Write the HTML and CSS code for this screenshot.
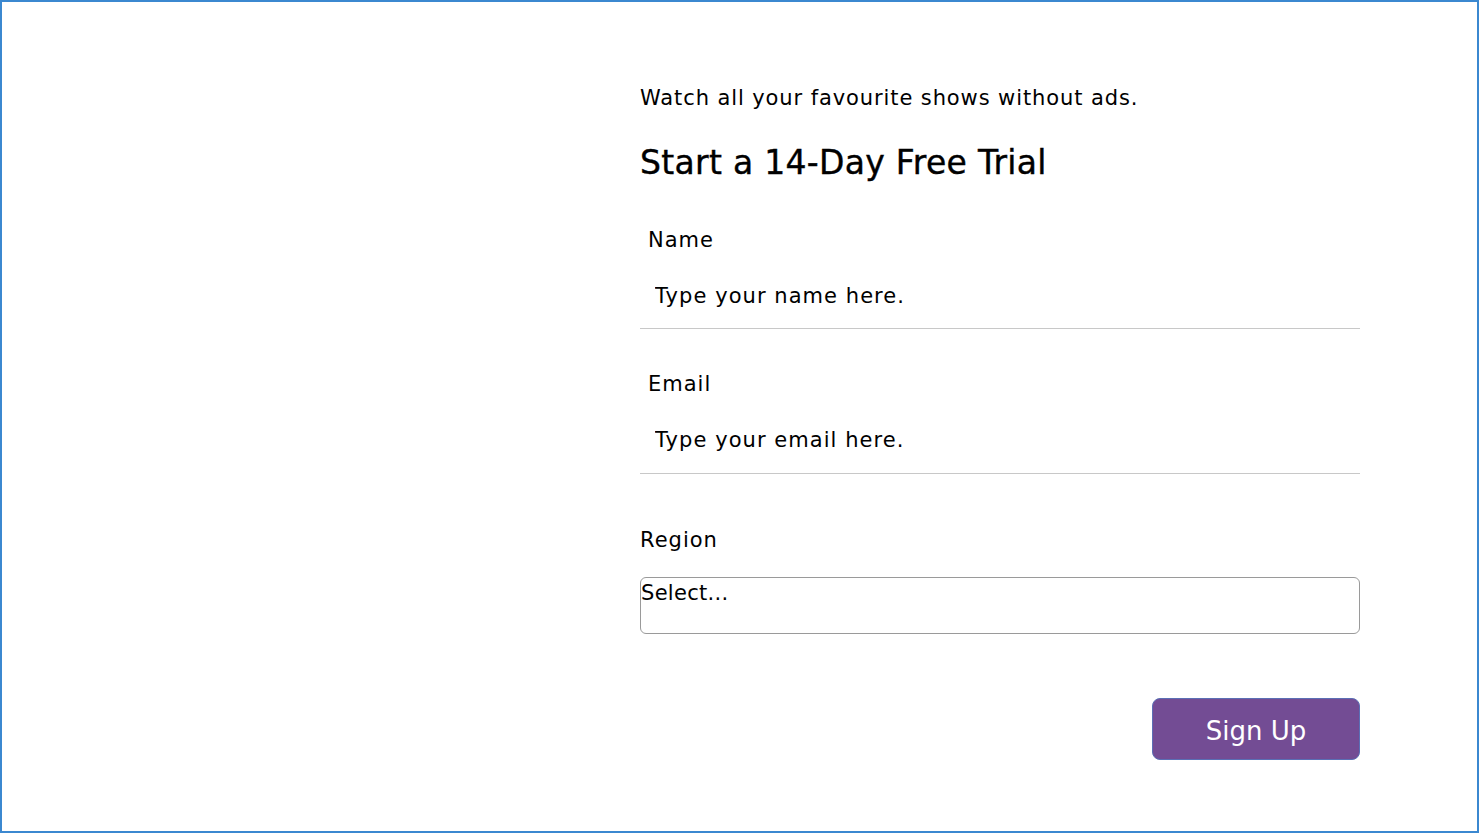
FILE: index.html
```html
<!DOCTYPE html>
<html lang="en">
<head>
<meta charset="utf-8">
<title>Start a 14-Day Free Trial</title>
<link rel="stylesheet" href="styles.css">
</head>
<body>
<div class="page">
  <main class="signup">
    <p class="tagline">Watch all your favourite shows without ads.</p>
    <h1 class="title">Start a 14-Day Free Trial</h1>
    <form class="form">
      <label class="field-label indent" for="name">Name</label>
      <input class="text-input" id="name" type="text" placeholder="Type your name here.">
      <label class="field-label indent gap-email" for="email">Email</label>
      <input class="text-input text-input-tall" id="email" type="email" placeholder="Type your email here.">
      <label class="field-label gap-region">Region</label>
      <div class="select-box">Select...</div>
      <div class="actions">
        <button class="signup-btn" type="button">Sign Up</button>
      </div>
    </form>
  </main>
</div>
</body>
</html>
```
FILE: styles.css
```css
* { box-sizing: border-box; }
html, body { margin: 0; padding: 0; background: #fff; }
body {
  font-family: "DejaVu Sans", "Open Sans", sans-serif;
  color: #000;
}
.page {
  width: 1479px;
  height: 833px;
  border: 2px solid #3b88d0;
  padding: 81px 0 0 638px;
}
.signup {
  width: 720px;
  display: flex;
  flex-direction: column;
}
.tagline {
  margin: 0;
  font-size: 21px;
  line-height: 30px;
  letter-spacing: 0.9px;
}
.title {
  margin: 30px 0 0;
  font-size: 33px;
  line-height: 40px;
  font-weight: 400;
  letter-spacing: 0.3px;
  -webkit-text-stroke: 0.4px #000;
}
.form {
  display: flex;
  flex-direction: column;
  margin-top: 42px;
}
.field-label {
  font-size: 21px;
  line-height: 30px;
  letter-spacing: 1px;
}
.indent { padding-left: 8px; }
.gap-email { margin-top: 40px; }
.gap-region { margin-top: 51px; }
.text-input {
  margin-top: 10px;
  height: 64px;
  border: none;
  border-bottom: 1px solid #c8c8c8;
  padding: 0 0 2px 15px;
  font-family: inherit;
  font-size: 21px;
  letter-spacing: 1.05px;
  color: #000;
  outline: none;
  background: transparent;
}
.text-input-tall { height: 65px; }
.text-input::placeholder { color: #000; opacity: 1; }
.select-box {
  margin-top: 22px;
  height: 57px;
  border: 1px solid #9a9a9a;
  border-radius: 6px;
  font-size: 21px;
  line-height: 30px;
  letter-spacing: 0.3px;
  padding: 0;
}
.actions {
  display: flex;
  justify-content: flex-end;
  margin-top: 64px;
}
.signup-btn {
  width: 208px;
  height: 62px;
  background: #734c94;
  border: 1px solid #5b6fb5;
  border-radius: 8px;
  color: #fff;
  font-family: inherit;
  font-size: 26px;
  padding: 3px 0 0;
}
```
